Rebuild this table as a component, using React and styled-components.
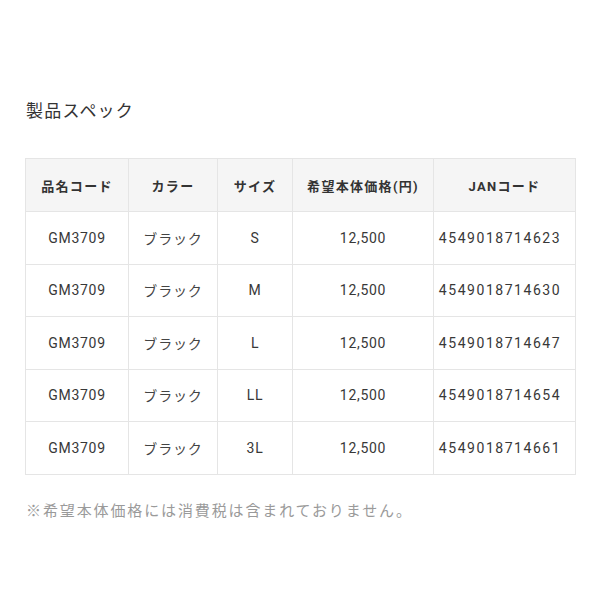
import React from 'react';
import styled, { createGlobalStyle } from 'styled-components';

const GlobalStyle = createGlobalStyle`
  body {
    margin: 0;
    background: #ffffff;
    font-family: "Roboto", "Noto Sans CJK JP", sans-serif;
    color: #333333;
  }
`;

const Page = styled.div`
  padding: 98px 25px 0 25px;
`;

const Title = styled.h2`
  margin: 0 0 34px 1px;
  font-size: 17px;
  font-weight: 400;
  line-height: 26px;
  letter-spacing: 0.07em;
  color: #333333;
`;

const Table = styled.table`
  width: 550px;
  border-collapse: collapse;
  table-layout: fixed;
`;

const HeadCell = styled.th`
  width: ${(p) => p.$w}px;
  height: 52px;
  padding: 0;
  background: #f5f5f5;
  border: 1px solid #e5e5e5;
  font-size: 13px;
  font-weight: 700;
  letter-spacing: 0.1em;
  text-align: center;
  color: #333333;
`;

const Cell = styled.td`
  height: 51.5px;
  padding: 0;
  border: 1px solid #e5e5e5;
  font-size: 14px;
  font-weight: 400;
  letter-spacing: 0.05em;
  text-align: center;
  color: #383838;
`;

const KanaCell = styled(Cell)`
  letter-spacing: 0.06em;
  color: #444444;
`;

const JanCell = styled(Cell)`
  padding-right: 9px;
  letter-spacing: 0.11em;
`;

const Note = styled.p`
  margin: 24px 0 0 1px;
  font-size: 15px;
  line-height: 24px;
  letter-spacing: 0.125em;
  color: #9a9a9a;
`;

const columns = [
  { label: '品名コード', w: 102 },
  { label: 'カラー', w: 88 },
  { label: 'サイズ', w: 74 },
  { label: '希望本体価格(円)', w: 140 },
  { label: 'JANコード', w: 141 },
];

const rows = [
  { code: 'GM3709', color: 'ブラック', size: 'S', price: '12,500', jan: '4549018714623' },
  { code: 'GM3709', color: 'ブラック', size: 'M', price: '12,500', jan: '4549018714630' },
  { code: 'GM3709', color: 'ブラック', size: 'L', price: '12,500', jan: '4549018714647' },
  { code: 'GM3709', color: 'ブラック', size: 'LL', price: '12,500', jan: '4549018714654' },
  { code: 'GM3709', color: 'ブラック', size: '3L', price: '12,500', jan: '4549018714661' },
];

const App = () => (
  <>
    <GlobalStyle />
    <Page>
      <Title>製品スペック</Title>
      <Table>
        <thead>
          <tr>
            {columns.map((c) => (
              <HeadCell key={c.label} $w={c.w}>
                {c.label}
              </HeadCell>
            ))}
          </tr>
        </thead>
        <tbody>
          {rows.map((r) => (
            <tr key={r.jan}>
              <Cell>{r.code}</Cell>
              <KanaCell>{r.color}</KanaCell>
              <Cell>{r.size}</Cell>
              <Cell>{r.price}</Cell>
              <JanCell>{r.jan}</JanCell>
            </tr>
          ))}
        </tbody>
      </Table>
      <Note>※希望本体価格には消費税は含まれておりません。</Note>
    </Page>
  </>
);

export default App;
